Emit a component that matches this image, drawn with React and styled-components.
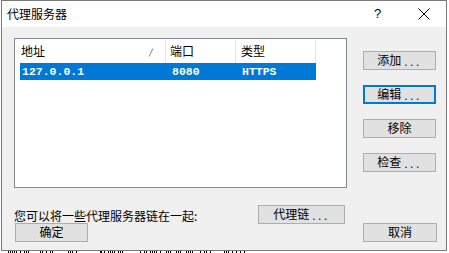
import React from "react"
import styled, { createGlobalStyle } from "styled-components"

const GlobalStyle = createGlobalStyle`
  html, body {
    margin: 0;
    padding: 0;
    background: #ffffff;
  }
  body {
    font-family: "Noto Sans CJK SC", "Liberation Sans", sans-serif;
    font-size: 12px;
    color: #000;
  }
`

const buttons = [
  { label: "添加", dots: true },
  { label: "编辑", dots: true, focused: true },
  { label: "移除" },
  { label: "检查", dots: true },
]

// tops of glyphs from the window behind the dialog
const marks = [
  8, 10, 12, 14, 16, 20, 24, 26, 28, 40, 42, 46, 50, 52, 68, 70, 72, 76, 100, 101,
  104, 108, 110, 112, 114, 118, 120, 122, 140, 144, 146, 150, 152, 154, 156, 160,
  166, 168, 170, 176, 178, 180, 186, 188, 190, 192, 200, 204, 206, 210, 224, 226,
  228, 232, 236, 240, 244,
]

const App = () => {
  return (
    <Page>
      <GlobalStyle />
      <Window>
        <TitleBar>
          <Title>代理服务器</Title>
          <Help>?</Help>
          <CloseIcon width="12" height="12" viewBox="0 0 12 12">
            <path d="M0.5 0.5 L11.5 11.5 M11.5 0.5 L0.5 11.5" stroke="#000" strokeWidth="1" fill="none" />
          </CloseIcon>
        </TitleBar>

        <Body>
          <TopRow>
            <ListBox>
              <Header>
                <HeadCell $w={146} $pad={1}>
                  地址
                  <SortMark width="6" height="9" viewBox="0 0 6 9">
                    <path d="M5 0.5 L1 8.5" stroke="#8a8a8a" strokeWidth="1" fill="none" />
                  </SortMark>
                </HeadCell>
                <HeadCell $w={70} $pad={4}>端口</HeadCell>
                <HeadCell $w={80} $pad={5}>类型</HeadCell>
              </Header>
              <Row $selected>
                <Cell $w={146} $pad={2}>127.0.0.1</Cell>
                <Cell $w={70} $pad={6}>8080</Cell>
                <Cell $w={80} $pad={6}>HTTPS</Cell>
              </Row>
            </ListBox>

            <SideButtons>
              {buttons.map(b => (
                <Button key={b.label} $focused={b.focused}>
                  {b.label}
                  {b.dots && <Dots>...</Dots>}
                </Button>
              ))}
            </SideButtons>
          </TopRow>

          <ChainRow>
            <ChainLabel>您可以将一些代理服务器链在一起:</ChainLabel>
            <Button $w={87}>
              代理链<Dots>...</Dots>
            </Button>
          </ChainRow>

          <FooterRow>
            <Button $w={73}>确定</Button>
            <Button $w={74}>取消</Button>
          </FooterRow>
        </Body>
      </Window>
      <Backdrop width="449" height="2" viewBox="0 0 449 2">
        {marks.map(x => (
          <rect key={x} x={x} y="0" width="1" height="2" fill="#000" />
        ))}
      </Backdrop>
    </Page>
  )
}

export default App

const Page = styled.div`
  width: 449px;
  height: 253px;
  overflow: hidden;
  padding-left: 1px;
  box-sizing: border-box;
`

const Window = styled.div`
  width: 446px;
  height: 251px;
  box-sizing: border-box;
  border: 1px solid #7a7a7a;
  background: #f0f0f0;
  display: flex;
  flex-direction: column;
`

const TitleBar = styled.div`
  height: 26px;
  background: #ffffff;
  display: flex;
  align-items: center;
  padding-left: 5px;
  flex-shrink: 0;
`

const Title = styled.div`
  font-size: 12px;
  line-height: 26px;
  flex: 1;
  padding-bottom: 1px;
`

const Help = styled.div`
  font-family: "Liberation Sans", sans-serif;
  font-size: 13px;
  width: 12px;
  margin-right: 32px;
  padding-bottom: 1px;
`

const CloseIcon = styled.svg`
  display: block;
  margin-right: 16px;
  margin-bottom: 1px;
`

const Body = styled.div`
  flex: 1;
  padding: 11px 0 0 12px;
  display: flex;
  flex-direction: column;
`

const TopRow = styled.div`
  display: flex;
  align-items: flex-start;
`

const ListBox = styled.div`
  width: 333px;
  height: 150px;
  box-sizing: border-box;
  border: 1px solid #828790;
  background: #ffffff;
  padding-left: 5px;
  flex-shrink: 0;
`

const Header = styled.div`
  display: flex;
  height: 24px;
`

const HeadCell = styled.div`
  position: relative;
  width: ${p => p.$w}px;
  box-sizing: border-box;
  padding-left: ${p => p.$pad}px;
  margin-top: 1px;
  border-right: 1px solid #e5e5e5;
  font-size: 12px;
  line-height: 22px;
  white-space: nowrap;
`

const SortMark = styled.svg`
  position: absolute;
  left: 128px;
  top: 8px;
`

const Row = styled.div`
  display: flex;
  height: 17px;
  width: 296px;
  background: ${p => (p.$selected ? "#0078d7" : "transparent")};
  color: ${p => (p.$selected ? "#ffffff" : "#000000")};
`

const Cell = styled.div`
  width: ${p => p.$w}px;
  box-sizing: border-box;
  padding-left: ${p => p.$pad}px;
  font-family: "Liberation Mono", monospace;
  font-weight: bold;
  font-size: 11.5px;
  line-height: 17px;
  white-space: nowrap;
`

const SideButtons = styled.div`
  display: flex;
  flex-direction: column;
  gap: 15px;
  padding-top: 13px;
  margin-left: 16px;
`

const Button = styled.div`
  width: ${p => p.$w || 73}px;
  height: 19px;
  box-sizing: border-box;
  border: ${p => (p.$focused ? "2px solid #0078d7" : "1px solid #adadad")};
  background: #e1e1e1;
  display: flex;
  align-items: center;
  justify-content: center;
  font-size: 12px;
  line-height: 1;
  white-space: nowrap;
  padding-bottom: 1px;
`

const Dots = styled.span`
  font-family: "Liberation Sans", sans-serif;
  letter-spacing: 2.5px;
  margin-left: 3px;
  margin-top: 4px;
`

const ChainRow = styled.div`
  display: flex;
  align-items: center;
  margin-top: 17px;
  height: 19px;
`

const ChainLabel = styled.div`
  width: 244px;
  font-size: 12px;
  line-height: 14px;
  padding-top: 3px;
`

const FooterRow = styled.div`
  display: flex;
  justify-content: space-between;
  padding-left: 1px;
  width: 422px;
  margin-top: -1px;
`

const Backdrop = styled.svg`
  display: block;
  margin-left: -1px;
`
